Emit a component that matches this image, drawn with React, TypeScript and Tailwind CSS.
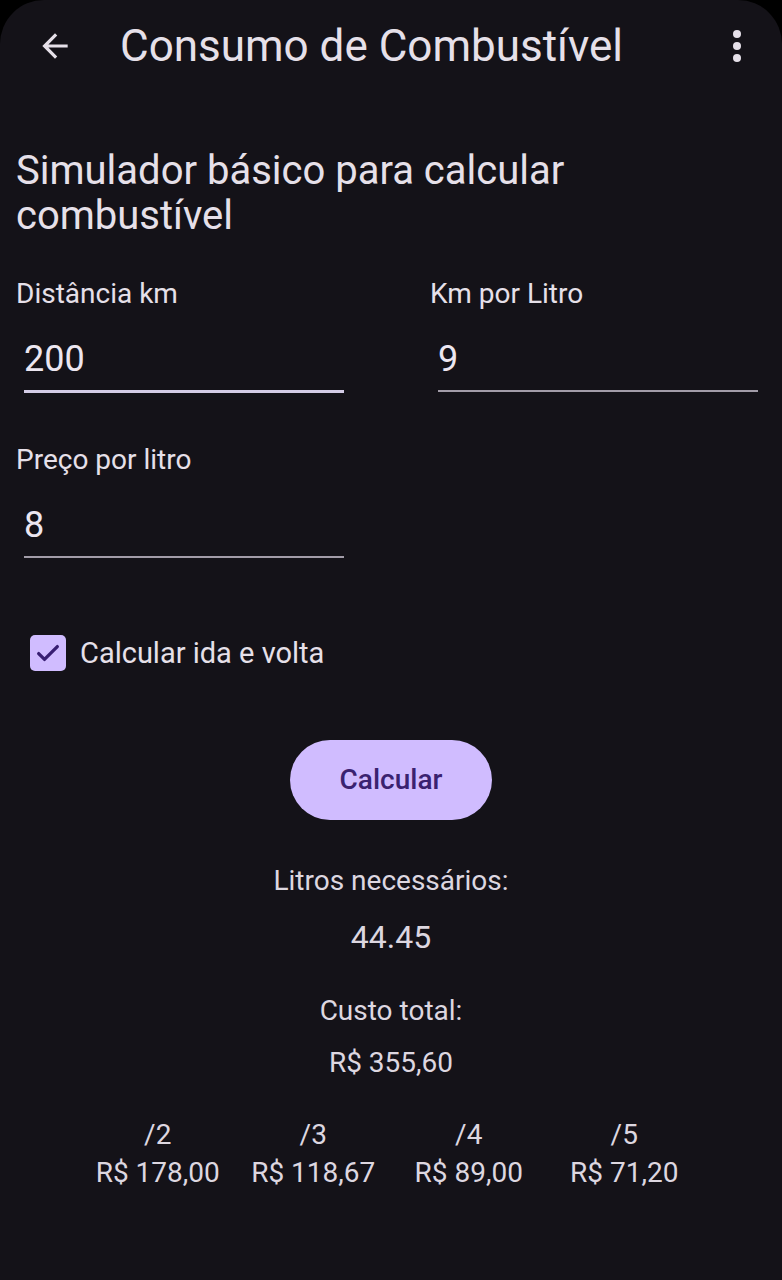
import React from "react";

export default function App() {
  const font = { fontFamily: "Roboto, 'Noto Sans', sans-serif" };
  return (
    <div className="w-[782px] h-[1280px] bg-black" style={font}>
      <div className="w-full h-full bg-[#141218] rounded-t-[44px] text-[#e6e0e9] flex flex-col">
        {/* App bar */}
        <div className="h-[92px] flex items-center pl-[36px] pr-[40px]">
          <svg width="38" height="38" viewBox="0 0 24 24" className="shrink-0">
            <path d="M20 11H7.83l5.59-5.59L12 4l-8 8 8 8 1.41-1.41L7.83 13H20v-2z" fill="#e6e0e9" />
          </svg>
          <div className="ml-[46px] text-[44px] leading-none flex-1">Consumo de Combustível</div>
          <svg width="10" height="34" viewBox="0 0 10 34" className="shrink-0">
            <circle cx="5" cy="5" r="4" fill="#e6e0e9" />
            <circle cx="5" cy="17" r="4" fill="#e6e0e9" />
            <circle cx="5" cy="29" r="4" fill="#e6e0e9" />
          </svg>
        </div>

        <div className="px-[16px] pt-[56px]">
          <div className="text-[40px] leading-[45px]">Simulador básico para calcular<br />combustível</div>
        </div>

        {/* Fields */}
        <div className="flex px-[16px] mt-[40px]">
          <div className="w-[414px]">
            <div className="text-[28px] leading-[32px]">Distância km</div>
            <div className="ml-[8px] w-[320px] mt-[31px]">
              <div className="text-[36px] leading-[36px] text-[#ece6f0]">200</div>
              <div className="h-[3px] bg-[#d4cce6] mt-[13px]" />
            </div>
          </div>
          <div>
            <div className="text-[28px] leading-[32px]">Km por Litro</div>
            <div className="ml-[8px] w-[320px] mt-[31px]">
              <div className="text-[36px] leading-[36px] text-[#ece6f0]">9</div>
              <div className="h-[2px] bg-[#a29ca8] mt-[13px]" />
            </div>
          </div>
        </div>

        <div className="px-[16px] mt-[51px]">
          <div className="text-[28px] leading-[32px]">Preço por litro</div>
          <div className="ml-[8px] w-[320px] mt-[31px]">
            <div className="text-[36px] leading-[36px] text-[#ece6f0]">8</div>
            <div className="h-[2px] bg-[#a29ca8] mt-[13px]" />
          </div>
        </div>

        {/* Checkbox */}
        <div className="flex items-center pl-[30px] mt-[77px]">
          <div className="w-[36px] h-[36px] rounded-[5px] bg-[#d0bcff] flex items-center justify-center">
            <svg width="28" height="28" viewBox="0 0 24 24">
              <path d="M4 12.5l5 5 11-11" stroke="#381e72" strokeWidth="2.8" fill="none" strokeLinecap="round" strokeLinejoin="round" />
            </svg>
          </div>
          <div className="ml-[14px] text-[29px] leading-[32px]">Calcular ida e volta</div>
        </div>

        {/* Button */}
        <div className="flex justify-center mt-[69px]">
          <div className="w-[202px] h-[80px] rounded-full bg-[#d0bcff] text-[#3a2270] flex items-center justify-center text-[28px] font-medium">
            Calcular
          </div>
        </div>

        {/* Results */}
        <div className="flex flex-col items-center mt-[44px] text-[#ddd7e0]">
          <div className="text-[28px] leading-[34px]">Litros necessários:</div>
          <div className="text-[32px] leading-[36px] mt-[21px]">44.45</div>
          <div className="text-[28px] leading-[34px] mt-[39px]">Custo total:</div>
          <div className="text-[28px] leading-[36px] mt-[17px]">R$ 355,60</div>
        </div>

        <div className="grid grid-cols-4 w-[622px] mx-auto mt-[36px] text-[#ddd7e0]">
          {[
            ["/2", "R$ 178,00"],
            ["/3", "R$ 118,67"],
            ["/4", "R$ 89,00"],
            ["/5", "R$ 71,20"],
          ].map(([a, b]) => (
            <div key={a} className="flex flex-col items-center">
              <div className="text-[28px] leading-[36px]">{a}</div>
              <div className="text-[28px] leading-[36px] mt-[2px]">{b}</div>
            </div>
          ))}
        </div>
      </div>
    </div>
  );
}
